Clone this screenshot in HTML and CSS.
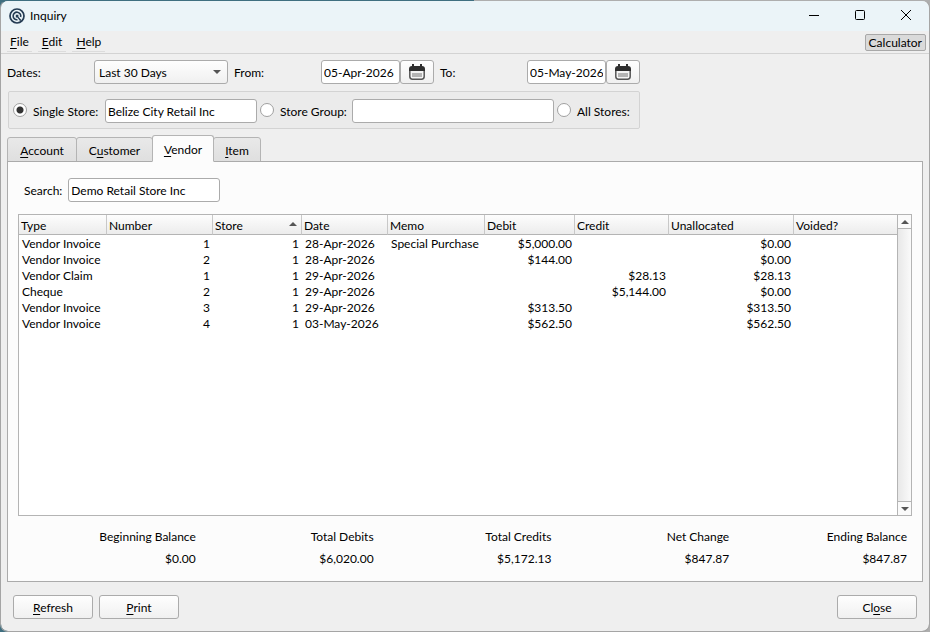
FILE: index.html
```html
<!DOCTYPE html>
<html lang="en">
<head>
    <meta charset="UTF-8">
    <meta name="viewport" content="width=device-width, initial-scale=1.0">
    <title>Inquiry</title>
    <link rel="stylesheet" href="styles.css">
</head>
<body>
    <div class="window">
        <header class="titlebar">
            <svg class="logo" viewBox="0 0 16 16" width="16" height="16">
                <circle cx="8" cy="8" r="7" fill="none" stroke="#243b53" stroke-width="1.7"/>
                <path d="M8.500 11.700A3.800 3.800 0 1 1 11.600 9" fill="none" stroke="#243b53" stroke-width="1.600"/>
                <path d="M6.800 6.800h2.600v2l3.200 3.400-1.600.8-2.600-3.400H6.800z" fill="#243b53"/>
            </svg>
            <h1>Inquiry</h1>
            <button class="win-btn" aria-label="Minimize">
                <svg viewBox="0 0 12 12" width="12" height="12"><path d="M1 5.500h10" stroke="#000"/></svg>
            </button>
            <button class="win-btn" aria-label="Maximize">
                <svg viewBox="0 0 12 12" width="12" height="12"><rect x="1.500" y=".5" width="9" height="9" rx="1" fill="none" stroke="#000"/></svg>
            </button>
            <button class="win-btn" aria-label="Close window">
                <svg viewBox="0 0 12 12" width="12" height="12"><path d="M1 0l10 10M11 0L1 10" stroke="#000"/></svg>
            </button>
        </header>

        <nav class="menubar">
            <button class="menu"><u>F</u>ile</button>
            <button class="menu"><u>E</u>dit</button>
            <button class="menu"><u>H</u>elp</button>
            <button class="calculator">Calculator</button>
        </nav>

        <div class="dates">
            <label class="date-label" for="range">Dates:</label>
            <div class="select">
                <select id="range">
                    <option>Last 30 Days</option>
                </select>
            </div>
            <label class="date-label" for="from">From:</label>
            <div class="date">
                <input type="text" id="from" value="05-Apr-2026">
                <button class="btn" aria-label="Pick from date">
                    <svg viewBox="0 0 16 16" width="16" height="16">
                        <path d="M.8 6v6.500a2.700 2.700 0 0 0 2.700 2.700h9a2.700 2.700 0 0 0 2.700-2.700V6" fill="#f4f4f4" stroke="#555" stroke-width="1.500"/>
                        <path d="M0 7V5a3 3 0 0 1 3-3h10a3 3 0 0 1 3 3v2z" fill="#2e2e2e"/>
                        <path d="M3 9h10v4H3z" fill="#b4b4b4"/>
                        <path d="M4 0v5M12 0v5" stroke="#2e2e2e" stroke-width="2"/>
                    </svg>
                </button>
            </div>
            <label class="date-label" for="to">To:</label>
            <div class="date">
                <input type="text" id="to" value="05-May-2026">
                <button class="btn" aria-label="Pick to date">
                    <svg viewBox="0 0 16 16" width="16" height="16">
                        <path d="M.8 6v6.500a2.700 2.700 0 0 0 2.700 2.700h9a2.700 2.700 0 0 0 2.700-2.700V6" fill="#f4f4f4" stroke="#555" stroke-width="1.500"/>
                        <path d="M0 7V5a3 3 0 0 1 3-3h10a3 3 0 0 1 3 3v2z" fill="#2e2e2e"/>
                        <path d="M3 9h10v4H3z" fill="#b4b4b4"/>
                        <path d="M4 0v5M12 0v5" stroke="#2e2e2e" stroke-width="2"/>
                    </svg>
                </button>
            </div>
        </div>

        <div class="stores">
            <div class="store">
                <input type="radio" name="scope" id="single" checked>
                <label for="single">Single Store:</label>
                <input type="text" class="single-name" aria-label="Store name" value="Belize City Retail Inc">
            </div>
            <div class="store">
                <input type="radio" name="scope" id="group">
                <label for="group">Store Group:</label>
                <input type="text" class="group-name" aria-label="Group name">
            </div>
            <div class="store">
                <input type="radio" name="scope" id="all">
                <label for="all">All Stores:</label>
            </div>
        </div>

        <div class="tabs" role="tablist">
            <button class="tab tab-account" role="tab"><span><u>A</u>ccount</span></button>
            <button class="tab tab-customer" role="tab"><span>C<u>u</u>stomer</span></button>
            <button class="tab tab-vendor active" role="tab" aria-selected="true"><span><u>V</u>endor</span></button>
            <button class="tab tab-item" role="tab"><span><u>I</u>tem</span></button>
        </div>

        <main class="pane">
            <div class="search">
                <label for="search">Search:</label>
                <input type="text" id="search" value="Demo Retail Store Inc">
            </div>

            <div class="grid">
                <div class="rows">
                    <table>
                        <colgroup>
                            <col class="c-type">
                            <col class="c-number">
                            <col class="c-store">
                            <col class="c-date">
                            <col class="c-memo">
                            <col class="c-debit">
                            <col class="c-credit">
                            <col class="c-unallocated">
                            <col>
                        </colgroup>
                        <thead>
                            <tr>
                                <th>Type</th>
                                <th>Number</th>
                                <th class="sorted">Store</th>
                                <th>Date</th>
                                <th>Memo</th>
                                <th>Debit</th>
                                <th>Credit</th>
                                <th>Unallocated</th>
                                <th>Voided?</th>
                            </tr>
                        </thead>
                        <tbody>
                            <tr><td>Vendor Invoice</td><td class="num">1</td><td class="num">1</td><td>28-Apr-2026</td><td>Special Purchase</td><td class="num">$5,000.00</td><td></td><td class="num">$0.00</td><td></td></tr>
                            <tr><td>Vendor Invoice</td><td class="num">2</td><td class="num">1</td><td>28-Apr-2026</td><td></td><td class="num">$144.00</td><td></td><td class="num">$0.00</td><td></td></tr>
                            <tr><td>Vendor Claim</td><td class="num">1</td><td class="num">1</td><td>29-Apr-2026</td><td></td><td></td><td class="num">$28.13</td><td class="num">$28.13</td><td></td></tr>
                            <tr><td>Cheque</td><td class="num">2</td><td class="num">1</td><td>29-Apr-2026</td><td></td><td></td><td class="num">$5,144.00</td><td class="num">$0.00</td><td></td></tr>
                            <tr><td>Vendor Invoice</td><td class="num">3</td><td class="num">1</td><td>29-Apr-2026</td><td></td><td class="num">$313.50</td><td></td><td class="num">$313.50</td><td></td></tr>
                            <tr><td>Vendor Invoice</td><td class="num">4</td><td class="num">1</td><td>03-May-2026</td><td></td><td class="num">$562.50</td><td></td><td class="num">$562.50</td><td></td></tr>
                        </tbody>
                    </table>
                </div>
                <div class="scrollbar">
                    <button class="scroll-up" aria-label="Scroll up"></button>
                    <button class="scroll-down" aria-label="Scroll down"></button>
                </div>
            </div>

            <dl class="totals">
                <div><dt>Beginning Balance</dt><dd>$0.00</dd></div>
                <div><dt>Total Debits</dt><dd>$6,020.00</dd></div>
                <div><dt>Total Credits</dt><dd>$5,172.13</dd></div>
                <div><dt>Net Change</dt><dd>$847.87</dd></div>
                <div><dt>Ending Balance</dt><dd>$847.87</dd></div>
            </dl>
        </main>

        <footer class="actions">
            <button class="btn"><span><u>R</u>efresh</span></button>
            <button class="btn"><span><u>P</u>rint</span></button>
            <button class="btn close"><span>Cl<u>o</u>se</span></button>
        </footer>
    </div>
</body>
</html>
```
FILE: styles.css
```css
* {
    box-sizing: border-box;
}
body {
    margin: 0;
    background: linear-gradient(to right, #3f6f80 51%, #aeaeae 51%);
    color: #000;
}
body, button, input, select {
    font-family: Lato, sans-serif;
    font-size: 12px;
    line-height: 16px;
}
button {
    padding: 0;
    color: #000;
}
u {
    text-underline-offset: 2px;
}
.window {
    display: flex;
    flex-direction: column;
    min-height: 100vh;
    border: 1px solid #a5a5a5;
    border-top-color: transparent;
    border-radius: 8px;
    background: #efefef padding-box;
    overflow: hidden;
}

/* title bar and menu */
.titlebar {
    display: flex;
    align-items: center;
    height: 30px;
    padding-left: 8px;
    background: #ebf4f8;
}
.titlebar h1 {
    flex: 1;
    margin: 0 0 0 5px;
    font-size: 12px;
    font-weight: normal;
}
.win-btn {
    width: 46px;
    height: 30px;
    border: none;
    background: none;
}
.win-btn svg {
    display: block;
    margin: auto;
}
.menubar {
    display: flex;
    align-items: flex-start;
    gap: 6px;
    height: 23px;
    padding: 2px 3px 0 6px;
    border-bottom: 1px solid #d3d3d3;
}
.menu {
    height: 19px;
    padding: 0 4px 1px;
    border: none;
    border-bottom: 1px solid #dcdcdc;
    background: none;
}
.menu:first-child {
    padding: 0 3px 1px;
}
.calculator {
    height: 17px;
    margin: 1px 0 0 auto;
    padding: 1px 3px 0;
    border: 1px solid #a8a8a8;
    border-radius: 2px;
    background: #dadada;
    line-height: 14px;
}

/* shared controls */
input[type="text"], select, .btn {
    height: 24px;
    border: 1px solid #ababab;
    border-radius: 3px;
}
input[type="text"] {
    padding: 1px 2px 0;
    background: #fff;
}
select, .btn {
    background: linear-gradient(#fefefe, #f0f0f0);
}
input[type="radio"] {
    appearance: none;
    width: 14px;
    height: 14px;
    margin: 0 0 2px;
    border: 1px solid #a0a0a0;
    border-radius: 50%;
    background: #fff;
}
input[type="radio"]:checked {
    background: radial-gradient(#333 3px, #fff 4px);
}

/* filters */
.dates {
    display: flex;
    align-items: center;
    gap: 6px;
    padding: 6px 6px 7px;
}
.date-label {
    width: 81px;
    padding-top: 2px;
}
.select {
    position: relative;
    width: 134px;
}
.select::after {
    content: "";
    position: absolute;
    top: 10px;
    right: 7px;
    border: 4px solid transparent;
    border-top-color: #555;
    border-bottom: none;
    pointer-events: none;
}
select {
    appearance: none;
    display: block;
    width: 100%;
    padding: 1px 4px 0;
    color: #000;
}
.date {
    display: flex;
}
.date input {
    width: 79px;
}
.date .btn {
    width: 34px;
}
.date svg {
    display: block;
    margin: auto;
}
.stores {
    display: flex;
    align-items: center;
    align-self: flex-start;
    gap: 3px;
    width: 632px;
    height: 38px;
    margin-left: 7px;
    padding: 1px 4px 0;
    border: 1px solid #d3d3d3;
    border-radius: 2px;
    background: #ebebeb;
}
.store {
    display: flex;
    align-items: center;
    gap: 6px;
}
.store label {
    width: 66px;
    padding-top: 2px;
    white-space: nowrap;
}
.single-name {
    width: 152px;
}
.group-name {
    width: 202px;
}

/* tabs */
.tabs {
    display: flex;
    align-items: flex-end;
    margin: 6px 6px -1px;
}
.tab {
    height: 25px;
    margin-right: -1px;
    padding-top: 2px;
    border: 1px solid #b4b4b4;
    border-radius: 3px 3px 0 0;
    background: linear-gradient(#e9e9e9, #dfdfdf);
}
.tab.active {
    z-index: 1;
    height: 27px;
    border-bottom-color: #fcfcfc;
    background: #fcfcfc;
}
.tab-account {
    width: 70px;
}
.tab-customer {
    width: 77px;
}
.tab-vendor {
    width: 62px;
}
.tab-item {
    width: 48px;
}
.pane {
    display: flex;
    flex: 1;
    flex-direction: column;
    margin: 0 6px;
    padding: 16px 10px 14px;
    border: 1px solid #ababab;
    background: #fcfcfc;
}
.search {
    display: flex;
    align-items: center;
    gap: 6px;
    padding-left: 6px;
}
.search label {
    min-width: 38px;
    padding-top: 2px;
}
.search input {
    width: 152px;
}

/* transactions */
.grid {
    display: flex;
    flex: 1;
    margin-top: 12px;
    border: 1px solid #b4b4b4;
    background: #fff;
}
.rows {
    flex: 1;
}
table {
    width: 100%;
    table-layout: fixed;
    border-collapse: separate;
    border-spacing: 0;
}
th {
    height: 20px;
    padding: 2px 2px 0;
    border-right: 1px solid #c8c8c8;
    border-bottom: 1px solid #b4b4b4;
    background: linear-gradient(#fdfdfd, #ececec);
    font-weight: normal;
    text-align: left;
}
th:last-child {
    border-right: none;
}
.sorted::after {
    content: "";
    float: right;
    margin: 4px 2px 0 0;
    border: 4px solid transparent;
    border-top: none;
    border-bottom-color: #555;
}
td {
    height: 16px;
    padding: 0 3px;
    white-space: nowrap;
}
tbody tr:first-child td {
    height: 17px;
    padding-top: 1px;
}
.num {
    text-align: right;
}
.c-type {
    width: 88px;
}
.c-number {
    width: 106px;
}
.c-store {
    width: 89px;
}
.c-date {
    width: 86px;
}
.c-memo {
    width: 97px;
}
.c-debit {
    width: 90px;
}
.c-credit {
    width: 94px;
}
.c-unallocated {
    width: 125px;
}
.scrollbar {
    display: flex;
    flex-direction: column;
    justify-content: space-between;
    width: 14px;
    border-left: 1px solid #b4b4b4;
    background: linear-gradient(to right, #e8e8e8, #fafafa);
}
.scrollbar button {
    display: flex;
    align-items: center;
    justify-content: center;
    height: 14px;
    border: none;
    background: #fafafa;
}
.scrollbar button::after {
    content: "";
    border: 4px solid transparent;
}
.scrollbar .scroll-up {
    border-bottom: 1px solid #b4b4b4;
}
.scrollbar .scroll-down {
    border-top: 1px solid #b4b4b4;
}
.scrollbar .scroll-up::after {
    border-top: none;
    border-bottom-color: #555;
}
.scrollbar .scroll-down::after {
    border-bottom: none;
    border-top-color: #555;
}

.totals {
    display: grid;
    grid-template-columns: repeat(5, 1fr);
    margin: 13px 5px 0 0;
    text-align: right;
}
.totals dd {
    margin: 6px 0 0;
}

/* bottom buttons */
.actions {
    display: flex;
    gap: 6px;
    padding: 13px 12px 12px;
}
.actions .btn {
    width: 80px;
    padding-top: 1px;
}
.actions .close {
    margin-left: auto;
}
```
